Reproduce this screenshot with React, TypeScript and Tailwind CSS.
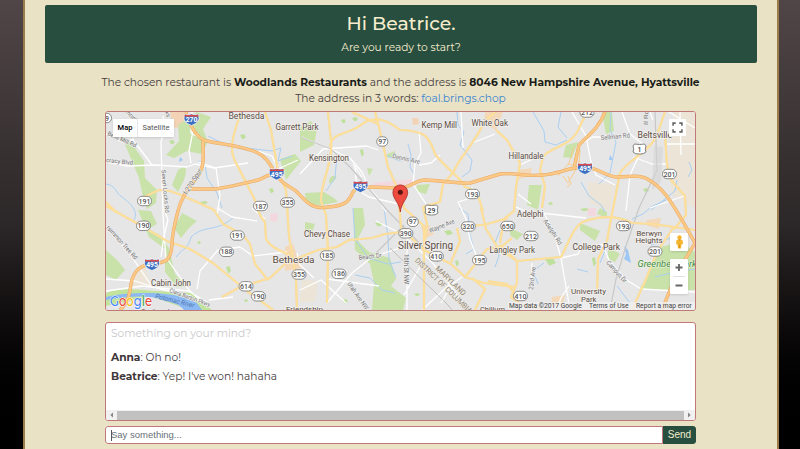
import React from "react";

const motorways = [
  "M186 112 C190 125 196 139 207 141 C225 145 244 146 258 153 C270 159 273 171 277 176 C284 186 292 187 297 192 C306 202 313 210 328 207 C346 206 349 201 353 192 C357 186 361 188 370 187 L398 188 C412 188 413 181 424 180 C440 180 459 184 470 183 L500 174 C512 172 526 177 542 175 C559 174 567 168 582 167 C597 166 605 177 618 177 C631 176 642 175 649 180 C665 189 674 207 682 220 L695 243 L677 273 L662 310",
  "M203 141 C203 155 205 166 198 176 C190 187 181 197 178 211 C174 226 172 234 172 245 C171 262 164 263 150 264 C138 266 133 273 131 284 C129 300 126 304 120 310",
  "M187 189 L216 189 C235 186 249 182 258 180 C266 178 267 173 277 175",
  "M605 112 C599 129 586 137 579 145 L574 168",
];

const arterials = [
  "M241 112 L237 124 C230 145 231 154 236 163 L254 198 C258 207 257 214 265 222 L266 239 C271 248 279 250 290 255",
  "M265 112 L271 130 L278 172 L286 190 L289 236 L296 277 L297 310",
  "M106 206 L140 225 L167 241 L190 249 L213 263 L230 277 L247 291 L273 310",
  "M144 197 L159 190 L170 191 L181 195 L199 203 L214 210 L223 224 L243 235 L250 244 L255 264 L268 280",
  "M106 202 L117 213",
  "M222 297 L240 287 L270 278 L286 263 L318 250 L337 247 L349 240 L372 238 L385 234 L401 232",
  "M328 112 L331 141 C333 164 320 184 321 201 L326 215 L328 252 L327 303",
  "M330 147 C332 130 348 137 365 122 C377 117 386 119 400 130 C424 131 429 135 435 154 C446 169 461 177 465 187 C481 191 478 199 483 211",
  "M352 112 L363 117 L378 124",
  "M375 112 L380 131 L388 167 L398 190 L401 228 L424 250 L451 264 L465 277 L484 283 L515 287",
  "M495 112 L484 122 C475 144 459 157 453 173 L443 184 L440 202 L423 207 L427 224 L424 247 L424 310",
  "M400 189 L404 208 L424 226 L424 248",
  "M481 208 L486 229 L498 248 L517 261",
  "M465 226 L484 225 L508 218",
  "M451 262 L460 241 L457 228",
  "M465 277 L477 262 L487 249 L501 247 L512 238",
  "M475 310 L485 289 L472 278",
  "M587 112 L580 126 C573 147 549 147 543 157 L540 170 L545 186 L542 208",
  "M496 130 L507 140 L520 163 L516 188 L514 211 L504 219 L500 243",
  "M665 112 L659 129 C654 151 629 158 620 173 L616 193 L610 224 L607 241 L598 259 L597 294",
  "M665 134 L667 165 L671 180 L685 196 L686 215 L674 229",
  "M500 245 L517 261 L561 257 C570 240 574 225 585 221 C606 214 620 217 632 223 L653 224 L695 230",
  "M517 261 L517 283 L511 297 L522 305 L540 308",
  "M673 228 L657 252 L646 279 L632 310",
  "M488 281 L507 284 L515 294",
];

const streets = [
  "M106 162 L127 166 L156 165 L187 167 L195 164 L214 168 L248 163 M163 116 L165 127 L161 142 L163 215 L166 260 M132 139 L140 149 L152 165",
  "M192 112 L191 133 L207 142 M198 162 L216 168 L220 196 L217 215 M191 163 L189 151 L193 131 M258 151 L272 156 L278 169 L298 160",
  "M106 134 L122 142 L134 139 M161 257 L164 236 L168 220 L164 209 M106 279 L135 281 L160 289 L190 296 L209 307",
  "M151 285 L132 257 L106 227 M168 260 L188 289 L204 304 M106 291 L142 286 L188 291 L207 302",
  "M197 289 L200 271 L218 250 L240 247 L253 256 L287 252 M209 300 L233 297 M217 208 L232 217 L257 221 M252 208 L265 219",
  "M301 137 L326 147 L350 158 L362 172 L369 188 L377 197 L386 212 M300 174 L323 149 L367 146 L378 150",
  "M419 131 L421 153 L415 164 L413 184 L426 204 M419 165 L431 163 L440 155 M353 164 L362 177",
  "M300 290 L321 280 L346 303 M400 248 L372 257 L352 273 L327 303 M376 221 L402 234 L430 260 L444 277 L468 310",
  "M407 249 L407 310 M424 260 L404 295 M450 284 L422 310 M462 277 L452 284 L441 303",
  "M355 166 L357 190 L369 197 L399 204 M461 112 L463 148 M520 165 L539 156 M472 143 L495 134",
  "M572 112 L586 136 L591 162 L596 175 L615 185 M622 112 L630 134 L644 145 L630 175 L626 211",
  "M633 157 L652 164 L667 164 M584 142 L593 137 L628 137 M516 207 L525 211 M518 194 L531 204",
  "M544 213 L554 233 L561 258 L565 281 L570 310 M561 258 L578 254 L581 248 L606 244",
  "M602 244 L609 260 L625 279 L641 289 L695 292 M532 263 L531 285 M532 212 L586 218",
  "M569 286 L562 296 L556 310 M650 208 L667 202 L684 196 M472 187 L471 198 L458 202 L466 219 L470 239 L478 260",
  "M669 112 L695 128 M667 144 L695 144 M680 112 L681 155 M650 112 L653 120",
  "M297 253 L300 265 L314 278 M327 279 L379 286",
];

const streams = [
  "M106 184 C116 185 116 194 122 197 C130 203 139 211 134 220",
  "M176 257 C184 247 188 249 191 237 C205 224 216 233 234 217",
  "M222 208 L217 193 L207 178 L205 164 L198 161 M208 136 L228 146 L272 151 L281 148 L278 161 L292 156",
  "M337 155 L335 178 L326 191 M408 144 L411 155 L410 167 L414 174 M385 155 L400 161 L410 158",
  "M457 112 L458 125 L464 132 L460 145 L472 160 L470 171 L462 177",
  "M533 112 L544 131 L545 142 L556 145 L567 140 M561 112 L558 127 L567 138",
  "M581 182 L589 196 L601 205 L605 212 M611 112 L610 130 L616 142 L610 173 L599 184",
  "M353 208 L355 239 L368 258 L388 264 L401 262 M384 208 L388 237 L389 260 L396 277",
  "M459 208 L468 214 L470 235 L474 249 L466 254 M500 230 L495 243 L499 256 L495 267",
  "M651 245 L676 236 M666 200 L651 207 L643 214 L632 219 M689 162 L692 170 L688 177",
  "M544 263 L533 271 L538 284 M577 269 L588 272 M602 247 L605 251 L600 263 M617 286 L630 303",
  "M651 210 L675 191 L677 180 M655 277 L675 272 L695 269",
  "M355 275 L370 278 L382 290 L395 293",
];

const parks = [
  "M197 112 L211 117 L203 129 L208 142 L201 154 L187 151 L174 158 L166 155 L179 141 L178 125Z",
  "M121 135 L133 145 L144 161 L145 178 L157 190 L156 203 L147 209 L143 197 L139 178Z",
  "M178 170 Q190 160 184 180 L178 192 L172 185Z",
  "M182 213 L197 221 L189 228 L181 238 L174 228Z",
  "M138 210 L151 211 L157 224 L148 229 L160 235 L169 248 L175 274 L188 287 L177 287 L165 272 L165 249 L149 237Z",
  "M106 250 L118 261 L125 270 L116 280 L106 275Z",
  "M300 128 L311 121 L304 112 L317 129 L314 145 L300 152Z",
  "M305 193 L324 192 L334 198 L338 202 L322 205 L306 204Z",
  "M353 208 L363 208 L365 225 L357 240 L369 252 L390 258 L396 279 L391 286 L406 298 L403 310 L372 310 L374 283 L370 264 L355 250Z",
  "M602 112 L612 112 L614 131 L606 134Z",
  "M566 145 L578 142 L572 158 L563 157Z",
  "M529 185 L542 185 L538 210 L527 205Z",
  "M656 248 L681 242 L695 252 L695 290 L639 290 L650 271Z",
  "M280 159 L295 154 L301 161 L286 180Z",
  "M417 185 L430 184 L426 194 L416 191Z",
  "M580 223 L600 231 L595 241 L580 230Z",
  "M332 176 Q342 174 330 184 Q327 180 332 176Z",
  "M367 168 L373 169 L369 176Z",
  "M387 154 L395 151 L395 156 L388 158Z",
  "M175 301 L182 300 L179 306Z",
  "M510 228 L523 234 L517 240 L510 235Z",
  "M608 247 L620 254 L615 262 L608 259Z",
  "M600 208 L607 212 L607 218 L597 214Z",
  "M305 222 L315 224 L311 235 L305 231Z",
];

const smallParks: [number, number, number, number][] = [
  [240, 134, 6, 5], [169, 140, 6, 4], [269, 188, 5, 5], [200, 201, 8, 3],
  [341, 119, 5, 4], [352, 117, 6, 4], [360, 149, 4, 7], [375, 222, 8, 4],
  [444, 230, 9, 5], [455, 260, 4, 6], [548, 202, 5, 3], [342, 299, 6, 4],
  [414, 293, 6, 3], [244, 299, 4, 3], [197, 241, 4, 3], [643, 188, 6, 4],
  [545, 258, 11, 7], [592, 257, 4, 9], [226, 266, 5, 7], [580, 208, 9, 3],
];

type Badge = { x: number; y: number; n: string };

const stateRoutes: Badge[] = [
  { x: 107, y: 118, n: "9" }, { x: 144.500, y: 201, n: "191" },
  { x: 260.500, y: 206, n: "187" }, { x: 287.500, y: 202.500, n: "355" },
  { x: 382.300, y: 141.500, n: "97" }, { x: 472.500, y: 194, n: "193" },
  { x: 587, y: 112.500, n: "212" }, { x: 669.500, y: 174, n: "201" },
  { x: 143.500, y: 225.800, n: "190" }, { x: 237.300, y: 235.500, n: "191" },
  { x: 226.500, y: 251.800, n: "188" }, { x: 246, y: 286.300, n: "614" },
  { x: 258.500, y: 296.300, n: "190" }, { x: 299, y: 274.500, n: "355" },
  { x: 412.800, y: 221.800, n: "97" }, { x: 405.800, y: 233.300, n: "390" },
  { x: 468.300, y: 226.500, n: "320" }, { x: 436.300, y: 256.300, n: "410" },
  { x: 479.500, y: 260, n: "195" }, { x: 327.300, y: 255.500, n: "185" },
  { x: 339, y: 273.800, n: "186" }, { x: 507.800, y: 226, n: "650" },
  { x: 531, y: 236, n: "212" }, { x: 623.500, y: 226, n: "193" },
  { x: 655, y: 251.500, n: "201" }, { x: 520.500, y: 296, n: "410" },
];

const interstates: Badge[] = [
  { x: 191.500, y: 119.500, n: "270" }, { x: 276.700, y: 174, n: "495" },
  { x: 360.500, y: 186.500, n: "495" }, { x: 585, y: 168.500, n: "495" },
  { x: 152, y: 264.500, n: "495" },
];

type Place = { x: number; y: number; w: number; s: number; t: string };

const places: Place[] = [
  { x: 228.500, y: 119.200, w: 36, s: 8.500, t: "Bethesda" },
  { x: 275.500, y: 130, w: 43, s: 8.200, t: "Garrett Park" },
  { x: 309, y: 161.200, w: 40, s: 8.400, t: "Kensington" },
  { x: 421.500, y: 128, w: 35.500, s: 8.400, t: "Kemp Mill" },
  { x: 471.500, y: 125.700, w: 36.500, s: 8.400, t: "White Oak" },
  { x: 508.500, y: 158.800, w: 35, s: 8.400, t: "Hillandale" },
  { x: 637.500, y: 138.300, w: 34.500, s: 8.400, t: "Beltsville" },
  { x: 151, y: 285.800, w: 40, s: 8.400, t: "Cabin John" },
  { x: 272.500, y: 263.200, w: 42, s: 9.600, t: "Bethesda" },
  { x: 304, y: 237, w: 46, s: 8.400, t: "Chevy Chase" },
  { x: 398, y: 248.500, w: 55, s: 10, t: "Silver Spring" },
  { x: 517, y: 216.700, w: 26.500, s: 8.400, t: "Adelphi" },
  { x: 489.500, y: 252.800, w: 45.500, s: 8.400, t: "Langley Park" },
  { x: 572.500, y: 250, w: 47.500, s: 8.600, t: "College Park" },
  { x: 636.500, y: 235.600, w: 25.500, s: 7.800, t: "Berwyn" },
  { x: 635.500, y: 243.300, w: 27, s: 7.800, t: "Heights" },
  { x: 571, y: 294, w: 35, s: 7.800, t: "University" },
  { x: 581, y: 301.700, w: 15.500, s: 7.600, t: "Park" },
  { x: 286, y: 312, w: 37, s: 7.400, t: "Friendship" },
  { x: 480, y: 312, w: 25, s: 7.400, t: "Chillum" },
];

type RoadName = Place & { r: number };

const roadNames: RoadName[] = [
  { x: 107, y: 135, w: 31, s: 6, r: 24, t: "Bells Mill Rd" },
  { x: 106, y: 162, w: 27, s: 6, r: 6, t: "cracy Blvd" },
  { x: 161.500, y: 170, w: 43, s: 6, r: 85, t: "Seven Locks Rd" },
  { x: 125, y: 112, w: 14, s: 6, r: 45, t: "mont" },
  { x: 165, y: 112, w: 14, s: 6, r: 72, t: "ks Ln" },
  { x: 187, y: 195, w: 29, s: 7, r: -58, t: "I-270 Spur" },
  { x: 106, y: 228, w: 43, s: 6.500, r: 48, t: "rsimmon Tree Rd" },
  { x: 392, y: 158, w: 28, s: 6.500, r: 12, t: "Dennis Ave" },
  { x: 430, y: 233, w: 27, s: 6.500, r: -22, t: "Wayne Ave" },
  { x: 359, y: 260, w: 23, s: 6.500, r: -7, t: "Beach Dr" },
  { x: 403.500, y: 254, w: 30, s: 6.500, r: 90, t: "16th St NW" },
  { x: 347, y: 284, w: 32, s: 6.500, r: 55, t: "Utah Ave NW" },
  { x: 601, y: 140, w: 29, s: 6.500, r: -5, t: "Sellman Rd" },
  { x: 648, y: 125, w: 15, s: 6, r: -89, t: "ll Rd" },
  { x: 543, y: 221, w: 29, s: 6.500, r: 57, t: "Adelphi Rd" },
  { x: 533, y: 290, w: 23, s: 6.500, r: -83, t: "23rd Ave" },
  { x: 606, y: 263, w: 27, s: 6.500, r: 48, t: "Campus Dr" },
  { x: 169, y: 292, w: 43, s: 6, r: 20, t: "Clara Barton Pkwy" },
];

function Shield({ x, y, n }: Badge) {
  return (
    <g transform={`translate(${x} ${y})`}>
      <path d="M-7 -5.500 Q-3.500 -4.300 0 -5.500 Q3.500 -4.300 7 -5.500 L7.500 -1 C7 2.800 3.500 4.500 0 6 C-3.500 4.500 -7 2.800 -7.500 -1Z" fill="#3c6fc0" stroke="#fff" strokeWidth=".7" />
      <path d="M-6.700 -5 Q-3.500 -3.800 0 -5 Q3.500 -3.800 6.700 -5 L7 -3 H-7Z" fill="#df4b47" />
      <text y="2.800" textAnchor="middle" fontSize="6.800" fontWeight="700" fill="#fff" stroke="none">{n}</text>
    </g>
  );
}

function RouteBadge({ x, y, n }: Badge) {
  const w = n.length === 1 ? 9 : n.length === 2 ? 11 : 14;
  return (
    <g transform={`translate(${x} ${y})`}>
      <rect x={-w / 2} y="-4.700" width={w} height="9.400" rx="4.500" fill="#fff" stroke="#70706d" strokeWidth=".8" />
      <text y="2.500" textAnchor="middle" fontSize="7" fontWeight="500" fill="#555">{n}</text>
    </g>
  );
}

function UsBadge({ x, y, n }: Badge) {
  return (
    <g transform={`translate(${x} ${y})`}>
      <path d="M-5 -5 Q0 -4 5 -5 L6.500 -3 Q5 0 6.500 3 Q4 5.500 0 5 Q-4 5.500 -6.500 3 Q-5 0 -6.500 -3Z" fill="#fff" stroke="#666" strokeWidth=".8" />
      <text y="2.600" textAnchor="middle" fontSize="7" fontWeight="500" fill="#444">{n}</text>
    </g>
  );
}

function GoogleWord() {
  return (
    <text x="110" y="306" fontSize="15" fontWeight="500" fontFamily="Montserrat, Lato, sans-serif" textLength="42" stroke="#fff" strokeWidth="1" paintOrder="stroke" lengthAdjust="spacingAndGlyphs">
      <tspan fill="#4285f4">G</tspan><tspan fill="#ea4335">o</tspan><tspan fill="#fbbc05">o</tspan><tspan fill="#4285f4">g</tspan><tspan fill="#34a853">l</tspan><tspan fill="#ea4335">e</tspan>
    </text>
  );
}

function MapDrawing() {
  return (
    <svg className="block h-full w-full font-[Roboto,sans-serif]" viewBox="106 112 589 198" preserveAspectRatio="none">
      <rect x="106" y="112" width="589" height="198" fill="#e6e6e6" />
      <g fill="#ebe4d7">
        <path d="M674 112 H695 V208 L672 194 L668 160Z M587 182 L614 184 L610 211 L590 203Z M302 280 L318 281 L315 302 L300 302Z M135 274 L145 267 L151 285 L132 288Z" />
        <path d="M485 112 H503 L496 130 L484 124Z M518 170 L532 168 L530 176 L519 179Z M646 220 L661 218 L659 229 L648 226Z M285 247 L293 244 L302 268 L285 271Z M552 297 L565 295 L562 308 L551 306Z M421 226 L429 225 L434 234 L425 239Z" fill="#f3d9b9" />
        <path d="M170 112 L185 112 L184 127 L173 128Z M412 118 L418 118 L419 124 L413 125Z" fill="#f3d3b5" />
        <path d="M270 214 L278 213 L277 222 L270 221Z M587 208 H596 V216 H588Z M374 183 L412 179 L412 185 L372 187Z" fill="#f3d9df" />
      </g>
      <g fill="#c9e2aa">{parks.map((d, i) => <path key={i} d={d} />)}</g>
      <g fill="#bfe09c">{smallParks.map(([x, y, w, h], i) => <path key={i} d={`M${x} ${y + 1} l${w * 0.7} -1 l${w * 0.3} ${h * 0.7} l${-w * 0.6} ${h * 0.4}Z`} />)}</g>
      <path d="M106 293 C122 287 139 290 155 291 L193 293 L212 310 H190 L150 296 L106 306Z" fill="#c1e39b" />
      <path d="M106 297 C122 293 137 293 153 293 C173 294 190 297 197 303 L202 310 H184 C179 303 169 302 162 300 C149 295 132 296 106 300Z" fill="#8db9f2" />
      <path d="M624 246 L628 250 L631 263 L624 259 L626 254Z M610 155 L613 160 L609 160Z M180 157 L183 160 L179 162Z" fill="#9dc8f5" />
      <g fill="none" stroke="#a9cff2" strokeWidth="1">{streams.map((d, i) => <path key={i} d={d} />)}</g>
      <g fill="none" stroke="#fff" strokeWidth="1.300" strokeLinejoin="round">{streets.map((d, i) => <path key={i} d={d} />)}</g>
      <path d="M300 137 L331 149 L350 167 L370 190 L386 209 L438 262 M376 253 L404 225 M639 208 L626 246 L616 279 L610 310 M655 112 L657 170 L639 208" fill="none" stroke="#c8c8c8" strokeWidth="1.200" />
      <path d="M654 146 L663 147 L661 182 L652 190Z" fill="#d4d4d4" opacity=".6" />
      <g fill="none" stroke="#f0d699" strokeWidth="2.200" strokeLinejoin="round">{arterials.map((d, i) => <path key={i} d={d} />)}</g>
      <g fill="none" stroke="#ffe09b" strokeWidth="1.700" strokeLinejoin="round">{arterials.map((d, i) => <path key={i} d={d} />)}</g>
      <path d="M574 147 L569 163 L558 176 M580 150 L579 164 L568 183 L563 176 M574 158 L586 168 M568 164 L577 166 M568 176 L571 184 L567 187" fill="none" stroke="#f9cc8e" strokeWidth="1" />
      <g fill="none" stroke="#e8a863" strokeWidth="3.400" strokeLinejoin="round">{motorways.map((d, i) => <path key={i} d={d} />)}</g>
      <g fill="none" stroke="#fbc885" strokeWidth="2.400" strokeLinejoin="round">{motorways.map((d, i) => <path key={i} d={d} />)}</g>
      <path d="M390 248 L448 305 L452 310" fill="none" stroke="#b9b5ad" strokeWidth=".8" />

      <g fill="#707070" stroke="#f1f1f1" strokeWidth="1.200" paintOrder="stroke">
        {roadNames.map((p) => <text key={p.t} transform={`translate(${p.x} ${p.y}) rotate(${p.r})`} fontSize={p.s} textLength={p.w} lengthAdjust="spacingAndGlyphs">{p.t}</text>)}
      </g>
      <g fill="#8e8575" stroke="#eeeae2" strokeWidth="1.200" paintOrder="stroke" fontSize="7.500">
        <text transform="translate(435 269) rotate(44)" textLength="39" lengthAdjust="spacingAndGlyphs">MARYLAND</text>
        <text transform="translate(414.500 261) rotate(44)" textLength="76" lengthAdjust="spacingAndGlyphs">DISTRICT OF COLUMBIA</text>
      </g>
      <text transform="translate(155 298) rotate(14)" fontSize="6.800" fontStyle="italic" fill="#4e78b4" textLength="40" lengthAdjust="spacingAndGlyphs">Potomac River</text>
      <text x="637.500" y="266.500" fontSize="8.800" fontStyle="italic" fill="#3e8b3b" stroke="#eef4e4" strokeWidth="1" paintOrder="stroke" textLength="59" lengthAdjust="spacingAndGlyphs">Greenbelt Park</text>
      <text x="141" y="313.500" fontSize="7" fill="#5b4c45" textLength="30" lengthAdjust="spacingAndGlyphs">Carderock</text>
      {stateRoutes.map((b, i) => <RouteBadge key={i} {...b} />)}
      <UsBadge x={431.500} y={210} n="29" />
      <UsBadge x={639.500} y={149} n="1" />
      {interstates.map((b, i) => <Shield key={i} {...b} />)}
      <g fill="#594b43" stroke="#f3f1ee" strokeWidth="1.400" paintOrder="stroke">
        {places.map((p, i) => <text key={i} x={p.x} y={p.y} fontSize={p.s} textLength={p.w} lengthAdjust="spacingAndGlyphs">{p.t}</text>)}
      </g>
      <path d="M400.300 212 C399.500 203 392.900 199 392.900 192.300 A7.400 7.400 0 0 1 407.700 192.300 C407.700 199 401.100 203 400.300 212Z" fill="#ee4b40" stroke="#a62a24" strokeWidth=".8" />
      <circle cx="400.300" cy="192.300" r="2.500" fill="#5a1411" />
      <GoogleWord />
    </svg>
  );
}

function MapPanel() {
  return (
    <div className="relative h-[200px] w-[591px] overflow-hidden rounded-[3px] border border-[#c0787b] font-[Roboto,sans-serif]">
      <MapDrawing />
      <div className="absolute left-[7px] top-[7px] flex h-[18px] bg-white text-[7.500px] leading-[18px] text-[#565656] shadow-sm">
        <span className="w-[25px] border-r border-[#e6e6e6] text-center font-medium text-black">Map</span>
        <span className="w-[36px] text-center">Satellite</span>
      </div>
      <div className="absolute right-[9px] top-[7px] flex size-[17px] items-center justify-center bg-white">
        <svg className="size-[11px]" viewBox="0 0 11 11" fill="none" stroke="#666" strokeWidth="1.600"><path d="M3.700 1.100H1.100V3.700M7.300 1.100H9.900V3.700M3.700 9.900H1.100V7.300M7.300 9.900H9.900V7.300" /></svg>
      </div>
      <div className="absolute right-[7px] top-[121px] flex size-[18px] items-center justify-center rounded-[1px] bg-white shadow-sm">
        <svg className="h-[14px] w-[9px]" viewBox="0 0 9 14"><circle cx="4.500" cy="2.500" r="2.200" fill="#f5b52e" /><path d="M1.500 5 Q4.500 3.800 7.500 5 L8 9 L6.500 9.500 L6 13.500 H3 L2.500 9.500 L1 9Z" fill="#f5b52e" /><path d="M3 4.500 H6 L4.500 5.500Z M4.200 9.500 H4.800 V13 H4.200Z" fill="#c97a19" /></svg>
      </div>
      <div className="absolute right-[7px] top-[147px] flex h-[35px] w-[18px] flex-col items-center rounded-[1px] bg-white shadow-sm">
        <svg className="h-[35px] w-[18px]" viewBox="0 0 18 35" fill="none" stroke="#666" strokeWidth="1.800"><path d="M5.500 8.500H12.500M9 5V12M5.500 26.500H12.500" /><path d="M3 17.500H15" stroke="#e1e1e1" strokeWidth="1" /></svg>
      </div>
      <div className="absolute bottom-0 right-0 flex h-[8px] bg-[#f0f0f0]/80 text-[6.700px] leading-[8px] text-[#444]">
        <span className="w-[80px] whitespace-nowrap pl-px">Map data ©2017 Google</span>
        <span className="w-[47px] whitespace-nowrap pl-px">Terms of Use</span>
        <span className="w-[60px] whitespace-nowrap pl-px">Report a map error</span>
      </div>
    </div>
  );
}

export default function App() {
  return (
    <div className="h-[449px] w-[800px] overflow-hidden bg-linear-to-b from-[#514647] via-[#2c2728] via-50% to-black pl-[23px] pr-[21px] font-[Montserrat,Inter,sans-serif] text-[#463e40]">
      <main className="flex h-full flex-col items-center border-x-2 border-[#9b7b49] bg-[#e9e2c5] pr-px pt-[5px]">
        <header className="ml-px flex h-[58px] w-[712px] flex-col items-center rounded-[2px] bg-[#284e40] text-[#f5edcd]">
          <h1 className="mt-[6px] text-[18.800px] font-medium leading-[26px]">Hi Beatrice.</h1>
          <p className="mt-[3px] text-[10.650px] leading-[16px]">Are you ready to start?</p>
        </header>
        <section className="mt-[12px] flex flex-col items-center whitespace-nowrap text-[10.650px] leading-[16px]">
          <p>The chosen restaurant is <b className="text-[#191b18]">Woodlands Restaurants</b> and the address is <b className="text-[#191b18]">8046 New Hampshire Avenue, Hyattsville</b></p>
          <p>The address in 3 words: <a className="text-[#3984d2]">foal.brings.chop</a></p>
        </section>
        <div className="mt-[4px]"><MapPanel /></div>
        <section className="mt-[11px] flex h-[99px] w-[591px] shrink-0 flex-col overflow-hidden rounded-[3px] border border-[#c0787b] bg-white text-[10.650px]">
          <p className="pl-[5px] pt-[3px] leading-[16px] text-[#c9c9c9]">Something on your mind?</p>
          <p className="mt-[7px] pl-[5px] leading-[18px]"><b className="text-[#40363a]">Anna</b>: Oh no!</p>
          <p className="pl-[5px] leading-[19px]"><b className="text-[#40363a]">Beatrice</b>: Yep! I've won! hahaha</p>
          <div className="mt-auto flex h-[10px] shrink-0 items-center bg-[#f1f1f1]">
            <svg className="h-[10px] w-[11px]" viewBox="0 0 11 10"><path d="M7 2.500V7.500L4.300 5Z" fill="#858585" /></svg>
            <span className="h-[9px] flex-1 bg-[#c1c1c1]" />
            <svg className="h-[10px] w-[11px]" viewBox="0 0 11 10"><path d="M4 2.500V7.500L6.700 5Z" fill="#858585" /></svg>
          </div>
        </section>
        <form className="mt-[5px] flex h-[18px] w-[591px] shrink-0 overflow-hidden rounded-[3px] font-['Liberation_Sans',sans-serif]">
          <div className="flex flex-1 items-center rounded-l-[3px] border border-[#c0787b] bg-white pl-[5px] text-[9.500px] text-[#697178]">
            <span className="-mr-px h-[11px] w-px bg-[#53585e]" />
            <span>Say something...</span>
          </div>
          <button type="button" className="h-[18px] w-[33px] rounded-r-[2px] bg-[#284e40] text-[10px] leading-[18px] text-[#f5edcd]">Send</button>
        </form>
      </main>
    </div>
  );
}
